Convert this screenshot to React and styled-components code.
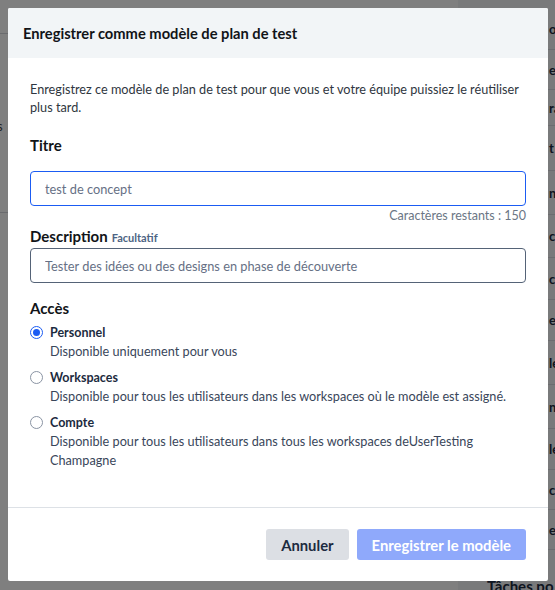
import React, { useState } from "react";
import styled, { createGlobalStyle } from "styled-components";

const Global = createGlobalStyle`
  html, body { margin: 0; padding: 0; }
  body {
    font-family: Lato, "Open Sans", Arial, sans-serif;
    background: #ffffff;
    width: 555px;
    height: 590px;
    overflow: hidden;
  }
  * { box-sizing: border-box; }
`;

const Page = styled.div`
  position: relative;
  width: 555px;
  height: 590px;
  display: flex;
  background: #fff;
  overflow: hidden;
`;

const LeftArea = styled.div`
  flex: 1;
  display: flex;
  flex-direction: column;
  padding-top: 33px;
`;

const LeftLine = styled.div`
  height: 1px;
  background: #d4d7dc;
`;

const LeftText = styled.div`
  font-size: 13px;
  color: #444;
  height: 20px;
  line-height: 20px;
  margin: 82px 0 76px 0;
  text-indent: -6px;
  white-space: nowrap;
`;

const RightPanel = styled.div`
  width: 97px;
  background: #f3f4f6;
  display: flex;
  flex-direction: column;
  padding-top: 8px;
`;

const RightRow = styled.div`
  flex: none;
  height: ${(p) => p.$h}px;
  border-bottom: 1px solid #d8dbe0;
  font-size: 13px;
  font-weight: 700;
  color: #1c2b40;
  display: flex;
  align-items: center;
  padding-left: 91px;
  white-space: nowrap;
  overflow: hidden;
`;

const RightFooter = styled.div`
  flex: none;
  font-size: 15px;
  line-height: 20px;
  font-weight: 700;
  color: #1c2b40;
  padding-left: 29px;
  margin-top: 26px;
  white-space: nowrap;
  overflow: hidden;
`;

const Overlay = styled.div`
  position: absolute;
  inset: 0;
  background: rgba(0, 0, 0, 0.5);
  padding: 8px 7px 9px 8px;
  display: flex;
`;

const Modal = styled.div`
  width: 540px;
  height: 573px;
  background: #fff;
  border-radius: 2px;
  display: flex;
  flex-direction: column;
  overflow: hidden;
`;

const Header = styled.div`
  height: 50px;
  background: #f2f5f7;
  display: flex;
  align-items: center;
  padding: 0 15px;
`;

const Title = styled.h2`
  margin: 0;
  font-size: 14.7px;
  font-weight: 700;
  color: #111418;
`;

const Body = styled.div`
  flex: 1;
  padding: 22px 22px 0 22px;
  display: flex;
  flex-direction: column;
`;

const Intro = styled.p`
  margin: 0 0 19px 0;
  font-size: 12.7px;
  line-height: 18px;
  color: #2f3640;
`;

const Label = styled.div`
  font-size: 15px;
  line-height: 20px;
  font-weight: 700;
  color: #111418;
  margin-bottom: ${(p) => p.$mb || 0}px;
  display: flex;
  align-items: baseline;
  gap: 4px;
`;

const Optional = styled.span`
  font-size: 11px;
  font-weight: 700;
  color: #4d6483;
`;

const Input = styled.input`
  width: 100%;
  height: 35px;
  border: 1px solid ${(p) => (p.$focus ? "#1b5cf3" : "#556377")};
  border-radius: 4px;
  padding: 0 14px;
  font-family: inherit;
  font-size: 12.8px;
  color: #667085;
  outline: none;
  background: #fff;
  &::placeholder { color: #667085; }
`;

const Counter = styled.div`
  text-align: right;
  font-size: 12.5px;
  line-height: 18px;
  color: #6b7685;
  margin: 1px 0 1px 0;
`;

const Field = styled.div`
  margin-bottom: ${(p) => p.$mb || 0}px;
  display: flex;
  flex-direction: column;
`;

const Options = styled.div`
  display: flex;
  flex-direction: column;
  gap: 7px;
  margin-top: 5px;
`;

const Option = styled.label`
  display: grid;
  grid-template-columns: 13px 1fr;
  column-gap: 7px;
  cursor: pointer;
`;

const Radio = styled.span`
  width: 13px;
  height: 13px;
  border-radius: 50%;
  border: 1px solid ${(p) => (p.$checked ? "#1b5cf3" : "#8a94a3")};
  margin-top: 3px;
  display: flex;
  align-items: center;
  justify-content: center;
  background: #fff;
  &::after {
    content: "";
    width: 7px;
    height: 7px;
    border-radius: 50%;
    background: ${(p) => (p.$checked ? "#1b5cf3" : "transparent")};
  }
`;

const OptionText = styled.div`
  display: flex;
  flex-direction: column;
`;

const OptionName = styled.div`
  font-size: 12.5px;
  line-height: 19px;
  font-weight: 700;
  color: #1c2b40;
`;

const OptionDesc = styled.div`
  font-size: 12.7px;
  line-height: 19px;
  color: #39465a;
`;

const Footer = styled.div`
  border-top: 1px solid #dde1e6;
  padding: 21px 22px 21px 22px;
  display: flex;
  justify-content: flex-end;
  gap: 8px;
`;

const Button = styled.button`
  height: 31px;
  border: none;
  border-radius: 3px;
  font-family: inherit;
  font-size: 14.8px;
  font-weight: 700;
  padding: 0 15px;
  background: ${(p) => (p.$primary ? "#8fa9fb" : "#dcdfe4")};
  color: ${(p) => (p.$primary ? "#ffffff" : "#1c2b40")};
  cursor: pointer;
`;

const rows = [
  ["o c", 42],
  ["e", 40],
  ["ra", 36],
  ["t", 45],
  ["n", 44],
  ["co", 43],
  ["c", 42],
  ["e", 41],
  ["le", 44],
  ["ns", 44],
  ["le", 41],
  ["c", 40],
  ["e", 40],
];

const options = [
  {
    id: "perso",
    name: "Personnel",
    desc: "Disponible uniquement pour vous",
  },
  {
    id: "ws",
    name: "Workspaces",
    desc: "Disponible pour tous les utilisateurs dans les workspaces où le modèle est assigné.",
  },
  {
    id: "compte",
    name: "Compte",
    desc: "Disponible pour tous les utilisateurs dans tous les workspaces deUserTesting Champagne",
  },
];

export default function App() {
  const [access, setAccess] = useState("perso");
  return (
    <>
      <Global />
      <Page>
        <LeftArea>
          <LeftLine />
          <LeftText>is</LeftText>
          <LeftLine />
        </LeftArea>
        <RightPanel>
          {rows.map(([t, h], i) => (
            <RightRow key={i} $h={h}>{t}</RightRow>
          ))}
          <RightFooter>Tâches po</RightFooter>
        </RightPanel>
        <Overlay>
          <Modal>
            <Header>
              <Title>Enregistrer comme modèle de plan de test</Title>
            </Header>
            <Body>
              <Intro>
                Enregistrez ce modèle de plan de test pour que vous et votre équipe puissiez le réutiliser plus tard.
              </Intro>
              <Field>
                <Label $mb={16}>Titre</Label>
                <Input $focus defaultValue="test de concept" />
                <Counter>Caractères restants : 150</Counter>
              </Field>
              <Field $mb={15}>
                <Label>
                  Description <Optional>Facultatif</Optional>
                </Label>
                <Input placeholder="Tester des idées ou des designs en phase de découverte" />
              </Field>
              <Label>Accès</Label>
              <Options>
                {options.map((o) => (
                  <Option key={o.id} onClick={() => setAccess(o.id)}>
                    <Radio $checked={access === o.id} />
                    <OptionText>
                      <OptionName>{o.name}</OptionName>
                      <OptionDesc>{o.desc}</OptionDesc>
                    </OptionText>
                  </Option>
                ))}
              </Options>
            </Body>
            <Footer>
              <Button>Annuler</Button>
              <Button $primary>Enregistrer le modèle</Button>
            </Footer>
          </Modal>
        </Overlay>
      </Page>
    </>
  );
}
